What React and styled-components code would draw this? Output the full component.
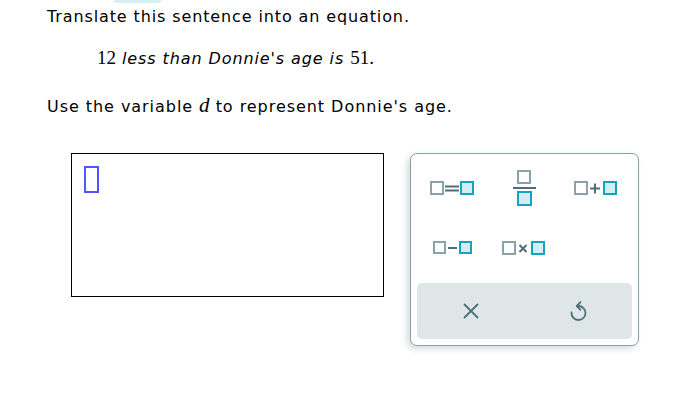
import React from "react";
import styled, { createGlobalStyle } from "styled-components";

const GlobalStyle = createGlobalStyle`
  html, body {
    margin: 0;
    padding: 0;
    background: #ffffff;
  }
  body {
    font-family: "DejaVu Sans", Verdana, sans-serif;
    color: #000;
  }
`;

const Page = styled.div`
  width: 684px;
  height: 408px;
  overflow: hidden;
`;

const TopTab = styled.div`
  width: 47px;
  height: 3px;
  margin-left: 114px;
  background: #d6f0f5;
  border-radius: 0 0 10px 10px;
`;

const Content = styled.div`
  padding-left: 47px;
`;

const Prompt = styled.p`
  margin: 4px 0 0;
  font-size: 16px;
  line-height: 20px;
  letter-spacing: 0.88px;
`;

const Sentence = styled.p`
  margin: 19px 0 0 50px;
  font-size: 16px;
  line-height: 24px;
  font-style: italic;
  letter-spacing: 0.9px;
`;

const Num = styled.span`
  font-family: "Liberation Serif", "Times New Roman", serif;
  font-style: normal;
  font-size: 19px;
  letter-spacing: 0;
`;

const Instruction = styled.p`
  margin: 24px 0 0;
  font-size: 16px;
  line-height: 20px;
  letter-spacing: 0.95px;
`;

const Var = styled.span`
  font-family: "Liberation Serif", "Times New Roman", serif;
  font-style: italic;
  font-size: 21px;
  letter-spacing: 0;
`;

const Work = styled.div`
  display: flex;
  align-items: flex-start;
  gap: 26px;
  margin: 36px 0 0 24px;
`;

const AnswerBox = styled.div`
  width: 311px;
  height: 142px;
  border: 1px solid #000;
`;

const Cursor = styled.div`
  width: 11px;
  height: 23px;
  margin: 12px 0 0 12px;
  border: 2px solid rgba(40, 40, 255, 0.8);
`;

const Palette = styled.div`
  width: 229px;
  height: 193px;
  border: 1px solid #86a0a9;
  border-radius: 7px;
  box-shadow: -3px 3px 6px rgba(40, 60, 70, 0.18);
  padding: 4px 6px 6px;
  box-sizing: border-box;
  display: flex;
  flex-direction: column;
  background: #fff;
`;

const KeyGrid = styled.div`
  display: grid;
  grid-template-columns: repeat(3, 1fr);
  grid-auto-rows: 60px;
`;

const Key = styled.button`
  border: none;
  background: transparent;
  padding: 0;
  display: flex;
  align-items: center;
  justify-content: center;
  cursor: pointer;
`;

const ActionBar = styled.div`
  margin-top: 5px;
  height: 56px;
  background: #dfe6e8;
  border-radius: 5px;
  display: grid;
  grid-template-columns: 1fr 1fr;
`;

const GRAY = "#8ca2aa";
const DARK = "#4e6e79";
const CYAN = "#17a3be";
const FILL = "#d3eef3";

const Empty = ({ x, y, s }) => (
  <rect x={x} y={y} width={s} height={s} fill="#fff" stroke={GRAY} strokeWidth="2" />
);
const Filled = ({ x, y, s }) => (
  <rect x={x} y={y} width={s} height={s} fill={FILL} stroke={CYAN} strokeWidth="2" />
);

const EqualsIcon = () => (
  <svg width="45" height="15" viewBox="0 0 45 15">
    <Empty x={1} y={1} s={12} />
    <path d="M15 5.5h14M15 9.5h14" stroke={DARK} strokeWidth="2" />
    <Filled x={31} y={1} s={12} />
  </svg>
);

const FractionIcon = () => (
  <svg width="23" height="37" viewBox="0 0 23 37">
    <Empty x={5} y={1} s={12} />
    <path d="M0 18h23" stroke={DARK} strokeWidth="2" />
    <Filled x={5} y={22} s={13} />
  </svg>
);

const PlusIcon = () => (
  <svg width="44" height="15" viewBox="0 0 44 15">
    <Empty x={1} y={1} s={12} />
    <path d="M16 7.5h10M21 2.5v10" stroke={DARK} strokeWidth="2" />
    <Filled x={30} y={1} s={12} />
  </svg>
);

const MinusIcon = () => (
  <svg width="39" height="14" viewBox="0 0 39 14">
    <Empty x={1} y={1} s={11} />
    <path d="M15 7h9" stroke={DARK} strokeWidth="2" />
    <Filled x={27} y={1} s={11} />
  </svg>
);

const TimesIcon = () => (
  <svg width="44" height="15" viewBox="0 0 44 15">
    <Empty x={1} y={1} s={12} />
    <path d="M17.5 4l7 7M24.5 4l-7 7" stroke={DARK} strokeWidth="2" />
    <Filled x={30} y={1} s={12} />
  </svg>
);

const CloseIcon = () => (
  <svg width="18" height="18" viewBox="0 0 18 18">
    <path d="M2 2l14 14M16 2L2 16" stroke={DARK} strokeWidth="1.8" fill="none" />
  </svg>
);

const UndoIcon = () => (
  <svg width="22" height="24" viewBox="0 0 22 24">
    <path
      d="M10 7h1.5A7 7 0 1 1 4.5 13.5"
      stroke={DARK}
      strokeWidth="1.8"
      fill="none"
      strokeLinecap="round"
    />
    <path
      d="M13.5 3.2L9.8 7l3.7 3.8"
      stroke={DARK}
      strokeWidth="1.8"
      fill="none"
      strokeLinecap="round"
      strokeLinejoin="round"
    />
  </svg>
);

const keys = [
  { id: "eq", icon: <EqualsIcon /> },
  { id: "frac", icon: <FractionIcon /> },
  { id: "plus", icon: <PlusIcon /> },
  { id: "minus", icon: <MinusIcon /> },
  { id: "times", icon: <TimesIcon /> },
];

const App = () => {
  return (
    <Page>
      <GlobalStyle />
      <TopTab />
      <Content>
        <Prompt>Translate this sentence into an equation.</Prompt>
        <Sentence>
          <Num>12</Num> less than Donnie's age is <Num>51.</Num>
        </Sentence>
        <Instruction>
          Use the variable <Var>d</Var> to represent Donnie's age.
        </Instruction>
        <Work>
          <AnswerBox>
            <Cursor />
          </AnswerBox>
          <Palette>
            <KeyGrid>
              {keys.map((k) => (
                <Key key={k.id}>{k.icon}</Key>
              ))}
            </KeyGrid>
            <ActionBar>
              <Key>
                <CloseIcon />
              </Key>
              <Key>
                <UndoIcon />
              </Key>
            </ActionBar>
          </Palette>
        </Work>
      </Content>
    </Page>
  );
};

export default App;
